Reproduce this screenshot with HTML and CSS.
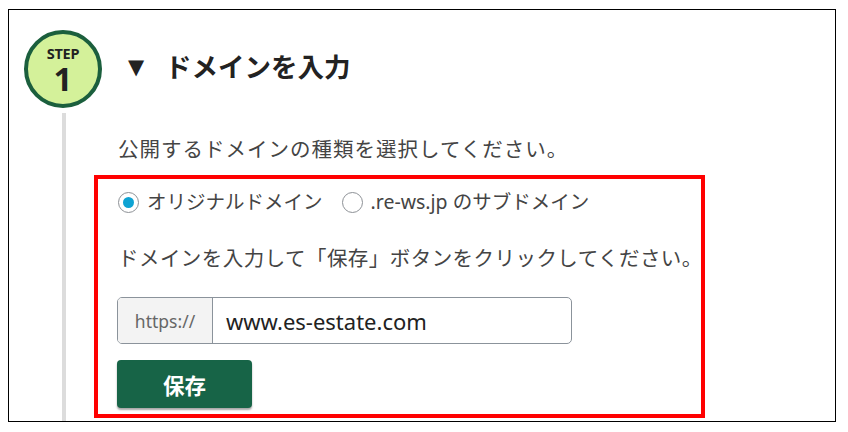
FILE: index.html
```html
<!DOCTYPE html>
<html lang="ja">
<head>
<meta charset="utf-8">
<link rel="stylesheet" href="styles.css">
</head>
<body>
<div class="frame">
  <div class="step">
    <div class="rail">
      <div class="badge">
        <span class="badge-label">STEP</span>
        <span class="badge-num">1</span>
      </div>
      <div class="rail-line"></div>
    </div>
    <div class="main">
      <h2 class="heading"><span class="caret">▼</span><span class="heading-text">ドメインを入力</span></h2>
      <p class="lead">公開するドメインの種類を選択してください。</p>
      <div class="highlight">
        <div class="radios">
          <label class="radio"><span class="radio-dot checked"></span>オリジナルドメイン</label>
          <label class="radio"><span class="radio-dot"></span>.re-ws.jp のサブドメイン</label>
        </div>
        <p class="hint">ドメインを入力して「保存」ボタンをクリックしてください。</p>
        <div class="input-group">
          <span class="prefix">https://</span>
          <span class="field">www.es-estate.com</span>
        </div>
        <button class="save">保存</button>
      </div>
    </div>
  </div>
</div>
</body>
</html>
```
FILE: styles.css
```css
* { box-sizing: border-box; }
html, body { margin: 0; padding: 0; background: #fff; }
body {
  padding: 9px 0 0 8px;
  font-family: "Noto Sans", "Noto Sans CJK JP", sans-serif;
  color: #444;
}
.frame {
  width: 828px;
  height: 413px;
  border: 1px solid #000;
  overflow: hidden;
  padding: 20px 0 0 15px;
}
.step { display: flex; height: 100%; }
.rail {
  width: 70px;
  flex-shrink: 0;
  display: flex;
  flex-direction: column;
  align-items: flex-start;
}
.badge {
  width: 78px;
  height: 78px;
  flex-shrink: 0;
  border: 4px solid #1b5f3d;
  border-radius: 50%;
  background: #d4f19a;
  display: flex;
  flex-direction: column;
  align-items: center;
  color: #222;
  font-weight: 700;
}
.badge-label { font-size: 14.5px; line-height: 12px; margin-top: 13px; letter-spacing: -0.3px; }
.badge-num { font-size: 33px; line-height: 28px; margin-top: 6px; }
.rail-line {
  width: 4px;
  flex: 1;
  margin: 5px 0 0 38px;
  background: #dcdcdc;
}
.main { flex: 1; display: flex; flex-direction: column; }
.main > *, .highlight > * { flex-shrink: 0; }
.heading {
  margin: 0;
  height: 70px;
  display: flex;
  align-items: center;
  padding-left: 34px;
  color: #222;
  font-weight: 700;
  font-size: 26.5px;
}
.caret {
  font-family: "DejaVu Sans", sans-serif;
  font-size: 21px;
  width: 37px;
  margin-top: 3px;
}
.lead {
  margin: 34px 0 0;
  padding-left: 24px;
  font-size: 20.5px;
  line-height: 30px;
  letter-spacing: 1px;
  white-space: nowrap;
}
.highlight {
  margin-top: 11px;
  width: 611px;
  border: 4px solid #ff0000;
  padding: 8px 0 6px 19px;
  display: flex;
  flex-direction: column;
  align-items: flex-start;
}
.radios { display: flex; gap: 19px; padding-left: 1px; }
.radio {
  display: flex;
  align-items: center;
  gap: 8px;
  font-size: 19.5px;
  line-height: 30px;
  color: #444;
  white-space: nowrap;
}
.radio-dot {
  width: 21px;
  height: 21px;
  border-radius: 50%;
  border: 1.5px solid #8d9196;
  background: #fff;
  display: flex;
  align-items: center;
  justify-content: center;
}
.radio-dot.checked::after {
  content: "";
  width: 11px;
  height: 11px;
  border-radius: 50%;
  background: #0ea3d3;
}
.hint {
  margin: 26px 0 0;
  padding-left: 1px;
  font-size: 20.5px;
  line-height: 30px;
  letter-spacing: 0.45px;
  white-space: nowrap;
}
.input-group {
  margin-top: 24px;
  width: 455px;
  height: 47px;
  display: flex;
  border: 1px solid #8b939b;
  border-radius: 5px;
  overflow: hidden;
}
.prefix {
  width: 95px;
  background: #f3f3f3;
  border-right: 1px solid #8b939b;
  display: flex;
  align-items: center;
  justify-content: center;
  font-size: 17.5px;
  color: #666;
}
.field {
  flex: 1;
  display: flex;
  align-items: center;
  padding-left: 13px;
  font-size: 22px;
  color: #222;
}
.save {
  margin-top: 16px;
  width: 135px;
  height: 48px;
  border: none;
  border-radius: 4px;
  background: #176447;
  color: #fff;
  font-family: "Noto Sans CJK JP", sans-serif;
  font-weight: 700;
  font-size: 21.5px;
  box-shadow: 0 2px 2px rgba(0, 0, 0, 0.35);
}
```
